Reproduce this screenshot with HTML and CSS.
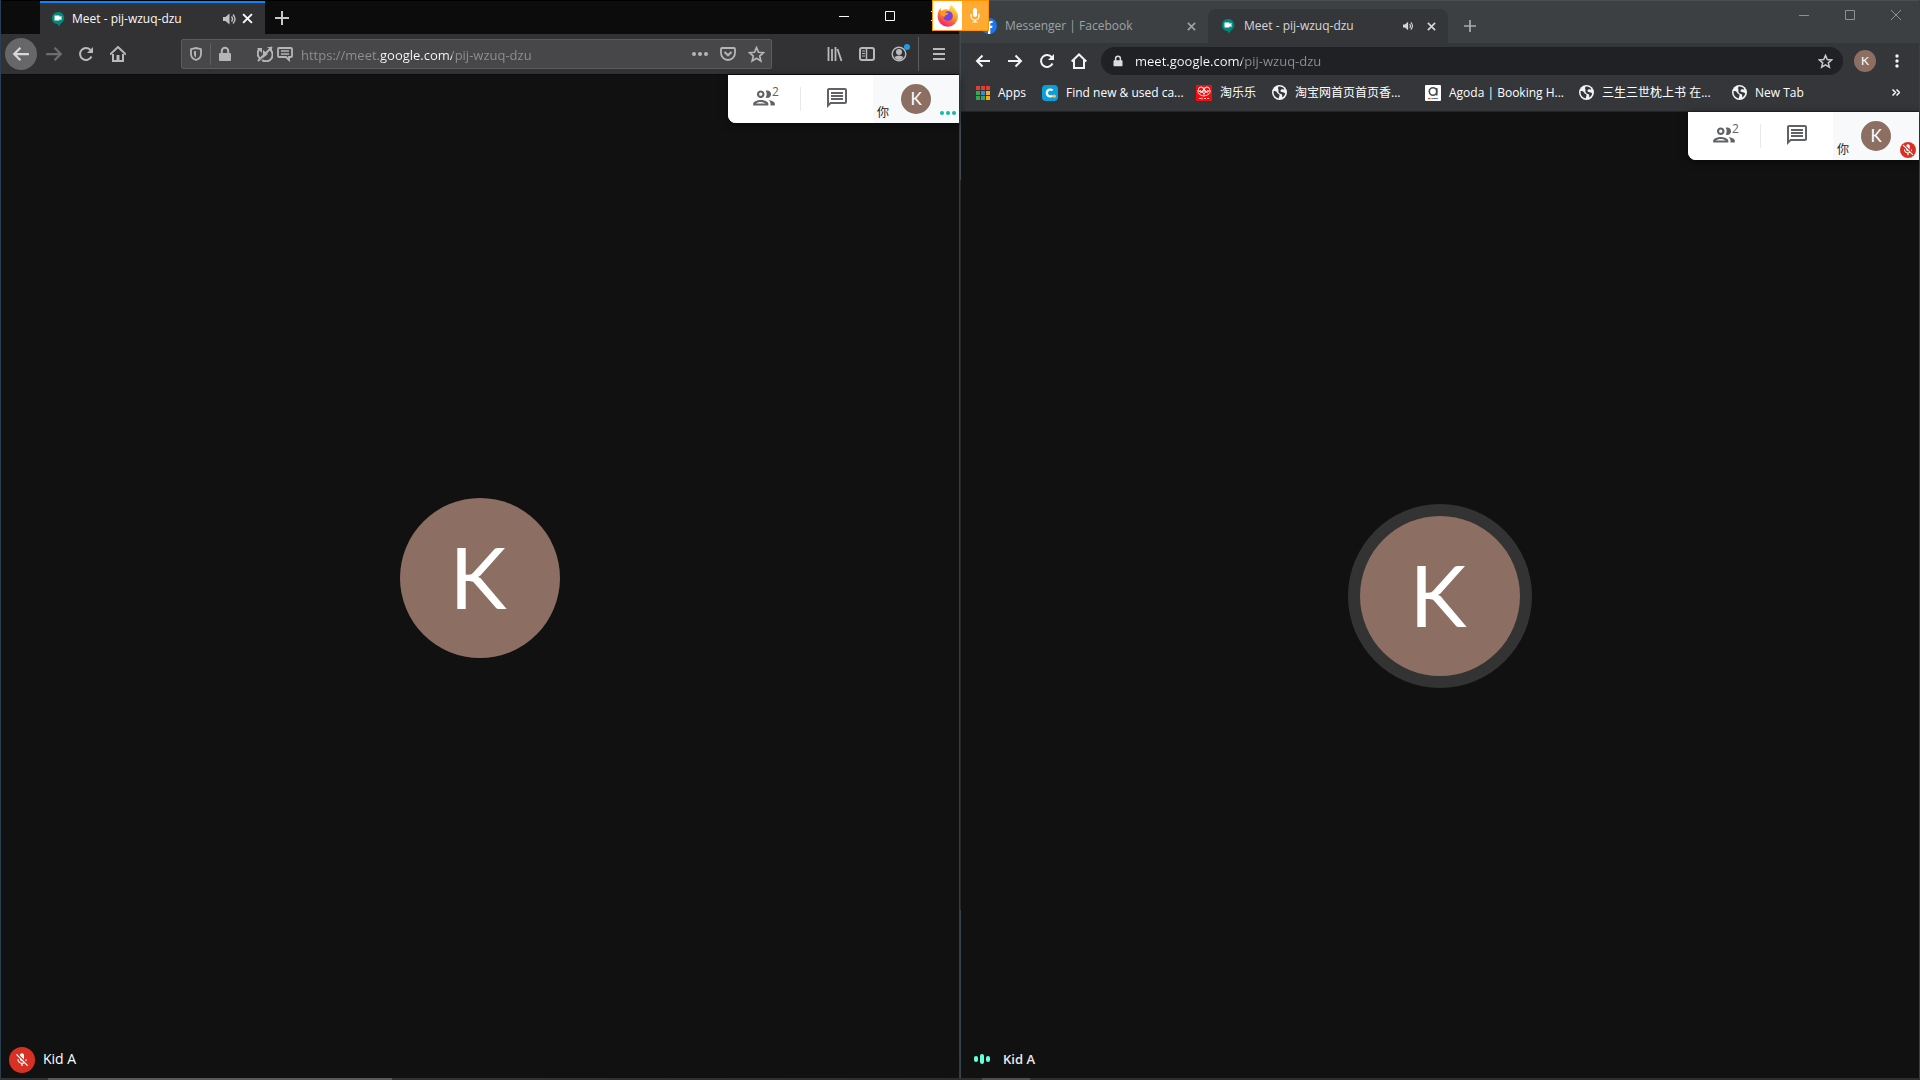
FILE: index.html
```html
<!DOCTYPE html>
<html lang="en">
<head>
<meta charset="utf-8">
<title>Meet - pij-wzuq-dzu</title>
<link rel="stylesheet" href="styles.css">
</head>
<body>
<svg class="defs" aria-hidden="true">
  <symbol id="meet" viewBox="0 0 14 16"><path d="M7 1a6 6 0 0 1 3.500 11L7.500 15.500l-.5-2.200A6 6 0 0 1 7 1z" fill="#00897b"/><path d="M3.500 4.500h5v1.500l2-1.300v4.600l-2-1.300v1.500h-5z" fill="#fff"/></symbol>
  <symbol id="people" viewBox="0 0 24 24"><path fill="currentColor" d="M9 13.750c-2.340 0-7 1.170-7 3.500V19h14v-1.750c0-2.330-4.660-3.500-7-3.500zM4.340 17c.84-.58 2.870-1.250 4.660-1.250s3.820.67 4.660 1.250H4.340zM9 12c1.930 0 3.500-1.570 3.500-3.500S10.930 5 9 5 5.500 6.570 5.500 8.500 7.070 12 9 12zm0-5c.83 0 1.500.67 1.500 1.500S9.830 10 9 10s-1.500-.67-1.500-1.500S8.170 7 9 7zm7.040 6.810c1.160.84 1.960 1.960 1.960 3.440V19h4v-1.750c0-2.020-3.500-3.170-5.960-3.440zM15 12c1.930 0 3.500-1.570 3.500-3.500S16.930 5 15 5c-.54 0-1.040.13-1.500.35.63.89 1 1.980 1 3.150s-.37 2.260-1 3.150c.46.22.96.35 1.500.35z"/></symbol>
  <symbol id="chat" viewBox="0 0 24 24"><path fill="currentColor" d="M4 4h16v12H5.170L4 17.170V4m0-2c-1.100 0-1.990.9-1.990 2L2 22l4-4h14c1.100 0 2-.9 2-2V4c0-1.100-.9-2-2-2H4zm2 10h12v2H6v-2zm0-3h12v2H6V9zm0-3h12v2H6V6z"/></symbol>
  <symbol id="micoff" viewBox="0 0 24 24"><path fill="#fff" d="M19 11h-1.700c0 .74-.16 1.430-.43 2.050l1.230 1.230c.56-.98.9-2.090.9-3.280zm-4.020.17c0-.06.02-.11.02-.17V5c0-1.660-1.340-3-3-3S9 3.340 9 5v.18l5.980 5.990zM4.270 3L3 4.270l6.010 6.010V11c0 1.660 1.330 3 2.990 3 .22 0 .44-.03.65-.08l1.660 1.660c-.71.33-1.500.52-2.310.52-2.760 0-5.300-2.100-5.300-5.100H5c0 3.410 2.720 6.230 6 6.720V21h2v-3.280c.91-.13 1.770-.45 2.540-.9L19.730 21 21 19.730 4.270 3z"/></symbol>
  <symbol id="back" viewBox="0 0 16 16"><path d="M15 8H2M7.500 2.500L2 8l5.500 5.500" fill="none" stroke="currentColor" stroke-width="2"/></symbol>
  <symbol id="forward" viewBox="0 0 16 16"><path d="M1 8h13M8.500 2.500L14 8l-5.500 5.500" fill="none" stroke="currentColor" stroke-width="2"/></symbol>
  <symbol id="reload" viewBox="0 0 16 16"><path d="M13.500 10.500A6 6 0 1 1 12.800 4.300" fill="none" stroke="currentColor" stroke-width="2"/><path d="M15 1v6H9z" fill="currentColor"/></symbol>
  <symbol id="lock" viewBox="0 0 16 16"><path d="M3 7h10a1 1 0 0 1 1 1v6a1 1 0 0 1-1 1H3a1 1 0 0 1-1-1V8a1 1 0 0 1 1-1z" fill="currentColor"/><path d="M4.800 8V5a3.200 3.200 0 0 1 6.400 0v3" fill="none" stroke="currentColor" stroke-width="2"/></symbol>
  <symbol id="star" viewBox="0 0 16 16"><path d="M8 1.500l1.900 4.400 4.700.4-3.600 3.100 1.100 4.700L8 11.600l-4.100 2.500L5 9.400 1.400 6.300l4.700-.4z" fill="none" stroke="currentColor" stroke-width="1.600"/></symbol>
  <symbol id="cross" viewBox="0 0 10 10"><path d="M1 1l8 8M9 1L1 9" fill="none" stroke="currentColor" stroke-width="1.800"/></symbol>
  <symbol id="plus" viewBox="0 0 14 14"><path d="M7 0v14M0 7h14" fill="none" stroke="currentColor" stroke-width="2"/></symbol>
  <symbol id="sound" viewBox="0 0 14 12"><path d="M0 4h2.500L6.500.5v11L2.500 8H0z" fill="currentColor"/><path d="M8.500 3.500q2 2.500 0 5M10 1.500q4 4.500 0 9" fill="none" stroke="currentColor" stroke-width="1.400"/></symbol>
  <symbol id="wmin" viewBox="0 0 10 10"><path d="M0 5.500h10" stroke="currentColor"/></symbol>
  <symbol id="wmax" viewBox="0 0 10 10"><path d="M.5.5h9v9h-9z" fill="none" stroke="currentColor"/></symbol>
  <symbol id="wclose" viewBox="0 0 10 10"><path d="M0 0l10 10M10 0L0 10" stroke="currentColor"/></symbol>
  <symbol id="globe" viewBox="0 0 14 14"><circle cx="7" cy="7" r="7" fill="#f1f3f4"/><path d="M1.500 5.500c2 0 3 .5 3.500 2s2 .5 2 2-.8 1.500-.5 3C4 12 1.500 10 1.500 7zM6 1.600c2.500-.4 4.500.6 5.500 2.400C10 4.500 9.500 3.500 8.500 4.500S7.500 6 9 6.500s3 .5 3.300 1.500c-.5 2-1.500 3-2.800 3.600 0-1.500.3-2.600-1-3.100S5.500 7 6 5.500 5 3.500 6 1.600z" fill="#35363a"/></symbol>
</svg>

<div class="desktop">
  <section class="window firefox" aria-label="Firefox">
    <header class="fx-tabs">
      <div class="fx-tab">
        <svg class="favicon"><use href="#meet"/></svg>
        <span class="tab-title">Meet - pij-wzuq-dzu</span>
        <button class="icon-btn fx-sound" aria-label="Mute tab"><svg width="14" height="12"><use href="#sound"/></svg></button>
        <button class="icon-btn fx-close" aria-label="Close tab"><svg width="11" height="11"><use href="#cross"/></svg></button>
      </div>
      <button class="icon-btn fx-new" aria-label="New tab"><svg width="14" height="14"><use href="#plus"/></svg></button>
      <div class="controls">
        <button class="icon-btn" aria-label="Minimize"><svg width="10" height="10"><use href="#wmin"/></svg></button>
        <button class="icon-btn" aria-label="Maximize"><svg width="10" height="10"><use href="#wmax"/></svg></button>
        <button class="icon-btn" aria-label="Close"><svg width="10" height="10"><use href="#wclose"/></svg></button>
      </div>
    </header>
    <nav class="fx-toolbar">
      <button class="icon-btn fx-back" aria-label="Back"><svg width="18" height="18"><use href="#back"/></svg></button>
      <button class="icon-btn tool dim" aria-label="Forward"><svg width="18" height="18"><use href="#forward"/></svg></button>
      <button class="icon-btn tool" aria-label="Reload"><svg width="16" height="16"><use href="#reload"/></svg></button>
      <button class="icon-btn tool" aria-label="Home"><svg width="16" height="16" viewBox="0 0 16 16"><path d="M0 8.500L8 1l8 7.500" fill="none" stroke="currentColor" stroke-width="2"/><path d="M3 8v7h10V8" fill="none" stroke="currentColor" stroke-width="2"/><path d="M6.500 9h3v5h-3z" fill="currentColor"/></svg></button>
      <div class="fx-url">
        <button class="icon-btn shield" aria-label="Tracking protection"><svg width="12" height="14" viewBox="0 0 12 14"><path d="M6 1l5 1.200V7c0 3-2 5-5 6-3-1-5-3-5-6V2.200z" fill="none" stroke="currentColor" stroke-width="1.800"/><path d="M6 4v6.500C4.500 9.500 4 8.500 4 7V4.300z" fill="currentColor"/></svg></button>
        <button class="icon-btn lock" aria-label="Site information"><svg width="16" height="16"><use href="#lock"/></svg></button>
        <button class="icon-btn small" aria-label="Autoplay blocked"><svg width="16" height="16" viewBox="0 0 16 16"><path d="M3 2.500A6.500 6.500 0 0 0 3 12.500M13 3.500A6.500 6.500 0 0 1 5 14" fill="none" stroke="currentColor" stroke-width="2"/><path d="M0 2h5v5zM10 1h5v4zM6 4l5 4-5 4z" fill="currentColor"/><path d="M1 15L15 1" stroke="currentColor" stroke-width="2"/></svg></button>
        <button class="icon-btn small" aria-label="Notifications"><svg width="16" height="16" viewBox="0 0 16 16"><path d="M2 2h12a1 1 0 0 1 1 1v7a1 1 0 0 1-1 1h-2v3l-3-3H2a1 1 0 0 1-1-1V3a1 1 0 0 1 1-1z" fill="none" stroke="currentColor" stroke-width="1.800"/><path d="M4 5h8M4 8h8" stroke="currentColor" stroke-width="1.400"/></svg></button>
        <input class="url-text fx-input" aria-label="Address" value="https://meet.google.com/pij-wzuq-dzu">
        <button class="icon-btn mark" aria-label="Page actions"><svg width="16" height="4" viewBox="0 0 16 4"><circle cx="2" cy="2" r="2"/><circle cx="8" cy="2" r="2"/><circle cx="14" cy="2" r="2"/></svg></button>
        <button class="icon-btn mark" aria-label="Save to Pocket"><svg width="16" height="14" viewBox="0 0 16 14"><path d="M2 1h12a1 1 0 0 1 1 1v4A7 7 0 0 1 1 6V2a1 1 0 0 1 1-1z" fill="none" stroke="currentColor" stroke-width="1.800"/><path d="M4.500 5L8 8.300 11.500 5" fill="none" stroke="currentColor" stroke-width="2"/></svg></button>
        <button class="icon-btn mark" aria-label="Bookmark"><svg width="17" height="17"><use href="#star"/></svg></button>
      </div>
      <button class="icon-btn tool" aria-label="Library"><svg width="16" height="16" viewBox="0 0 16 16"><path d="M1.500 1v14M5 3v12M8.500 1v14M10.500 3l4 12" stroke="currentColor" stroke-width="1.800"/></svg></button>
      <button class="icon-btn tool" aria-label="Sidebars"><svg width="16" height="14" viewBox="0 0 16 14"><rect x="1" y="1" width="14" height="12" rx="2" fill="none" stroke="currentColor" stroke-width="2"/><path d="M7.500 1v12" stroke="currentColor" stroke-width="1.500"/><path d="M3 4h3M3 6.500h3M3 9h3" stroke="currentColor"/></svg></button>
      <button class="icon-btn tool account" aria-label="Account"><svg width="16" height="16" viewBox="0 0 16 16"><circle cx="8" cy="8" r="6.800" fill="none" stroke="currentColor" stroke-width="1.400"/><circle cx="8" cy="6" r="3" fill="currentColor"/><path d="M3.500 11q4.500-3 9 0-1.500 3-4.500 3t-4.500-3z" fill="currentColor"/></svg><i class="notice"></i></button>
      <i class="rule"></i>
      <button class="icon-btn tool" aria-label="Menu"><svg width="12" height="12" viewBox="0 0 12 12"><path d="M0 1h12M0 6h12M0 11h12" stroke="currentColor" stroke-width="2"/></svg></button>
    </nav>
    <main class="video">
      <div class="panel">
        <button class="seg" aria-label="People"><svg width="26" height="26"><use href="#people"/></svg><span class="count">2</span></button>
        <button class="seg chat" aria-label="Chat"><svg width="24" height="24"><use href="#chat"/></svg></button>
        <div class="you"><span class="you-label" lang="zh">你</span><span class="avatar mid">K</span>
          <svg class="dots" width="16" height="4" viewBox="0 0 16 4"><circle cx="2" cy="2" r="2"/><circle cx="8" cy="2" r="2"/><circle cx="14" cy="2" r="2"/></svg></div>
      </div>
      <span class="avatar big">K</span>
      <div class="name"><span class="muted"><svg width="16" height="16"><use href="#micoff"/></svg></span><span>Kid A</span></div>
    </main>
  </section>

  <section class="window chrome" aria-label="Chrome">
    <header class="cr-tabs">
      <div class="cr-tab">
        <svg class="cr-fav" viewBox="0 0 16 16"><circle cx="8" cy="8" r="8" fill="#1877f2"/><path d="M7 16v-6H5V7.700h2V6c0-2 1.200-3.100 3-3.100h1.600V5h-1.100c-.9 0-1.200.5-1.200 1.200v1.500h2.200L11.200 10H9.300v6z" fill="#fff"/></svg>
        <span class="tab-title">Messenger | Facebook</span>
        <button class="icon-btn cr-close" aria-label="Close tab"><svg width="9" height="9"><use href="#cross"/></svg></button>
      </div>
      <div class="cr-tab active">
        <svg class="cr-fav"><use href="#meet"/></svg>
        <span class="tab-title">Meet - pij-wzuq-dzu</span>
        <button class="icon-btn cr-sound" aria-label="Mute tab"><svg width="11" height="10"><use href="#sound"/></svg></button>
        <button class="icon-btn cr-close" aria-label="Close tab"><svg width="9" height="9"><use href="#cross"/></svg></button>
      </div>
      <button class="icon-btn cr-new" aria-label="New tab"><svg width="12" height="12"><use href="#plus"/></svg></button>
      <div class="controls">
        <button class="icon-btn" aria-label="Minimize"><svg width="10" height="10"><use href="#wmin"/></svg></button>
        <button class="icon-btn" aria-label="Maximize"><svg width="10" height="10"><use href="#wmax"/></svg></button>
        <button class="icon-btn" aria-label="Close"><svg width="10" height="10"><use href="#wclose"/></svg></button>
      </div>
    </header>
    <nav class="cr-toolbar">
      <button class="icon-btn tool" aria-label="Back"><svg width="16" height="16"><use href="#back"/></svg></button>
      <button class="icon-btn tool" aria-label="Forward"><svg width="16" height="16"><use href="#forward"/></svg></button>
      <button class="icon-btn tool" aria-label="Reload"><svg width="16" height="16"><use href="#reload"/></svg></button>
      <button class="icon-btn tool" aria-label="Home"><svg width="16" height="16" viewBox="0 0 16 16"><path d="M.7 8.500L8 1.500l7.300 7M3 7v8h10V7" fill="none" stroke="currentColor" stroke-width="2"/></svg></button>
      <div class="cr-url">
        <button class="icon-btn cr-lock" aria-label="Site information"><svg width="12" height="12"><use href="#lock"/></svg></button>
        <input class="url-text cr-input" aria-label="Address" value="meet.google.com/pij-wzuq-dzu">
        <button class="icon-btn cr-star" aria-label="Bookmark"><svg width="15" height="15"><use href="#star"/></svg></button>
      </div>
      <button class="icon-btn tool profile" aria-label="Profile"><span class="avatar tiny">K</span></button>
      <button class="icon-btn tool" aria-label="Menu"><svg width="4" height="14" viewBox="0 0 4 14"><g fill="currentColor"><circle cx="2" cy="2" r="1.700"/><circle cx="2" cy="7" r="1.700"/><circle cx="2" cy="12" r="1.700"/></g></svg></button>
    </nav>
    <nav class="bookmarks">
      <a href="#"><svg width="14" height="14" viewBox="0 0 14 14"><path d="M0 0h4v4H0zM5 0h4v4H5zM10 0h4v4h-4z" fill="#ea3a30"/><path d="M0 5h4v4H0zM0 10h4v4H0z" fill="#34a853"/><path d="M5 5h4v4H5z" fill="#2b8cf0"/><path d="M5 10h4v4H5z" fill="#34a853"/><path d="M10 5h4v4h-4zM10 10h4v4h-4z" fill="#fbab12"/></svg><span>Apps</span></a>
      <a href="#"><svg width="16" height="16" viewBox="0 0 16 16"><rect width="16" height="16" rx="4" fill="#0c9ddb"/><path d="M10.500 5.500A3.400 3.400 0 1 0 10.500 10.500" fill="none" stroke="#fff" stroke-width="2.300"/><circle cx="12.300" cy="11.200" r="1.600" fill="#fdc04d"/></svg><span class="cut">Find new &amp; used ca...</span></a>
      <a href="#"><svg width="16" height="16" viewBox="0 0 16 16"><path d="M0 0h16v16H0z" fill="#f40b0b"/><circle cx="5" cy="4.500" r="2.500" fill="none" stroke="#fff"/><circle cx="11" cy="4.500" r="2.500" fill="none" stroke="#fff"/><path d="M2 5q-1 5 6 6 7-1 6-6M4 5l4 4 4-4M4 8.500l4-4 4 4M8 2v9M3 13.500h2M6 12.500v2M8 13.500h2M11 13.500h2" fill="none" stroke="#fff" stroke-width=".8"/></svg><span lang="zh">淘乐乐</span></a>
      <a href="#"><svg width="15" height="15"><use href="#globe"/></svg><span class="cut" lang="zh">淘宝网首页首页香...</span></a>
      <a href="#"><svg width="16" height="16" viewBox="0 0 16 16"><rect width="16" height="16" rx="1" fill="#fff"/><circle cx="8" cy="6.500" r="3.700" fill="none" stroke="#4a4a4a" stroke-width="1.600"/><path d="M11.800 3v7.500" stroke="#4a4a4a" stroke-width="1.500"/><path d="M3 13.500h2" stroke="#e33"/><path d="M5 13.500h2" stroke="#f93"/><path d="M7 13.500h2" stroke="#3a5"/><path d="M9 13.500h2" stroke="#93c"/><path d="M11 13.500h2" stroke="#29d"/></svg><span class="cut">Agoda | Booking H...</span></a>
      <a href="#"><svg width="15" height="15"><use href="#globe"/></svg><span class="cut" lang="zh">三生三世枕上书 在...</span></a>
      <a href="#"><svg width="15" height="15"><use href="#globe"/></svg><span>New Tab</span></a>
      <button class="icon-btn more" aria-label="More bookmarks"><svg width="8" height="7" viewBox="0 0 8 7"><path d="M.5.500l3 3-3 3M4.500.500l3 3-3 3" fill="none" stroke="currentColor" stroke-width="1.500"/></svg></button>
    </nav>
    <main class="video">
      <div class="panel">
        <button class="seg" aria-label="People"><svg width="26" height="26"><use href="#people"/></svg><span class="count">2</span></button>
        <button class="seg chat" aria-label="Chat"><svg width="24" height="24"><use href="#chat"/></svg></button>
        <div class="you"><span class="you-label" lang="zh">你</span><span class="avatar mid">K</span>
          <span class="badge"><svg width="14" height="14"><use href="#micoff"/></svg></span></div>
      </div>
      <span class="avatar big ring">K</span>
      <div class="name bold"><svg width="16" height="10" viewBox="0 0 16 10"><g fill="#64ffda"><rect y="2" width="4" height="6" rx="2"/><rect x="6" width="4" height="10" rx="2"/><rect x="12" y="2" width="4" height="6" rx="2"/></g></svg><span>Kid A</span></div>
    </main>
  </section>

  <div class="sharing" role="status" aria-label="Firefox is using your microphone">
    <span class="share-logo"><svg width="22" height="22" viewBox="0 0 22 22"><defs><linearGradient id="fox" x1=".8" y1="0" x2=".3" y2="1"><stop offset="0" stop-color="#fff04a"/><stop offset=".45" stop-color="#ff9a1e"/><stop offset="1" stop-color="#f5156c"/></linearGradient></defs><path d="M15 0c1 3 6 6 6 11.500a10.200 10.200 0 0 1-20.400 0C.6 8 1.500 5 3.500 3L4 6l3-1.500c2-.8 4 .3 5.500.3C12 3 13 1 15 0z" fill="url(#fox)"/><circle cx="11" cy="11" r="4.800" fill="#7542e5"/><path d="M3 8c3-2 6-.5 8.500.5-1 1.800-3.500 1-4 3.500-2-.5-4-2-4.500-4z" fill="#ff9a1e"/></svg></span>
    <span class="share-mic"><svg width="10" height="15" viewBox="0 0 10 15"><rect x="3" width="4" height="9" rx="2" fill="#fff"/><path d="M1 6v2a4 4 0 0 0 8 0V6M5 12v2M2.500 14h5" fill="none" stroke="#fff" stroke-width="1.200"/></svg></span>
  </div>
  <div class="taskbar"></div>
</div>
</body>
</html>
```
FILE: styles.css
```css
* { box-sizing: border-box; }
body {
  margin: 0;
  background: #111;
  font: 12px/16px "Open Sans", "Noto Sans CJK SC", sans-serif;
  color: #f9f9fa;
}
svg { display: block; flex: none; }
.defs { position: absolute; width: 0; height: 0; }
.desktop {
  position: relative;
  display: grid;
  grid-template-columns: 1fr 1fr;
  min-height: 100vh;
}
.window {
  display: flex; flex-direction: column; min-width: 0; padding: 0 1px;
  background: linear-gradient(#2c3f58, #29404c);
}
.chrome { background: linear-gradient(90deg, transparent 50%, #2c3f68 50%), linear-gradient(#3f4b50 180px, #262626 180px, #262626 910px, #35444e 910px); }
.icon-btn {
  display: flex; align-items: center; justify-content: center;
  flex: none; padding: 0; border: 0; background: none; color: inherit; font: inherit;
}
.icon-btn svg { fill: currentColor; }
.tool { width: 32px; height: 32px; }
.tab-title { flex: 1; white-space: nowrap; }
.controls { display: flex; margin-left: auto; }
.controls .icon-btn { width: 46px; height: 30px; }
.avatar {
  display: flex; align-items: center; justify-content: center; flex: none;
  border-radius: 50%; background: #8d6e63; color: #fff;
  font-family: Lato, sans-serif;
}
.tiny { width: 22px; height: 22px; font-size: 12px; }
.mid { width: 30px; height: 30px; font-size: 17px; }
.big { width: 160px; height: 160px; padding: 0 4px 4px 0; font-size: 86px; line-height: 120px; }
.ring { box-shadow: 0 0 0 12px #333; }
.url-text {
  flex: 1; min-width: 0; padding: 0; border: 0; outline: 0;
  font: 13px/20px "Open Sans", sans-serif;
  background-clip: text; -webkit-background-clip: text;
  -webkit-text-fill-color: transparent;
}

/* Firefox */
.fx-tabs { display: flex; height: 34px; background: #0c0c0d; border-top: 1px solid #000; }
.fx-tab {
  display: flex; align-items: center; width: 225px; margin-left: 39px; padding: 0 12px 0 11px;
  background: #323234; border-top: 2px solid #0a84ff;
}
.favicon { width: 14px; height: 16px; margin-right: 7px; }
.fx-sound { margin-right: 5px; color: #c1c1c3; }
.fx-new { width: 34px; color: #c8c8ca; }
.fx-toolbar {
  display: flex; align-items: center; height: 41px; padding: 0 4px;
  background: #323234; border-bottom: 1px solid #0c0c0d; color: #b9b9bb;
}
.fx-back { width: 32px; height: 32px; margin-right: 1px; border-radius: 50%; background: #676769; color: #d8d8d9; }
.dim { color: #6d6d6f; }
.fx-url {
  display: flex; align-items: center; flex: 1; height: 30px; margin: 0 47px;
  padding-right: 1px; background: #474749; border: 1px solid #5c5c5e; color: #b5b5b7; border-radius: 2px;
}
.shield { width: 29px; height: 22px; border-right: 1px solid #5f5f61; }
.lock { width: 28px; margin-right: 16px; }
.small { width: 20px; }
.fx-input { padding-top: 2px; margin-left: 6px; color: #909092; background-color: transparent; background-image: linear-gradient(90deg, #909092 79px, #f9f9fa 79px, #f9f9fa 151px, #909092 151px); }
.mark { width: 28px; }
.account { position: relative; }
.notice { position: absolute; top: 6px; right: 5px; width: 6px; height: 6px; border-radius: 50%; background: #1b9de8; }
.rule { width: 1px; height: 34px; margin: 0 4px 0 3px; background: #5c5c5e; }

/* Chrome */
.cr-tabs { display: flex; height: 43px; background: #3c4043; border-top: 1px solid #4b4f52; }
.cr-tab { display: flex; align-items: center; width: 239px; margin-top: 8px; padding: 0 12px; color: #9fa2a5; }
.cr-tab:first-child { margin-left: 8px; }
.cr-tab.active { width: 240px; background: #35363a; border-radius: 8px 8px 0 0; color: #d5d7da; }
.cr-fav { width: 16px; height: 16px; margin-right: 8px; }
.cr-sound { margin-right: 13px; }
.cr-new { width: 44px; margin-top: 8px; color: #a8abad; }
.chrome .controls { color: #8e9193; }
.chrome .controls .icon-btn { height: 28px; }
.cr-toolbar { display: flex; align-items: center; height: 36px; padding: 0 6px; background: #35363a; color: #f1f3f4; }
.cr-url { display: flex; align-items: center; flex: 1; height: 28px; margin: 0 6px; border-radius: 14px; background: #202124; }
.cr-lock { width: 34px; color: #dadce0; }
.cr-input { color: #9aa0a6; background-color: transparent; background-image: linear-gradient(90deg, #fff 107px, #8d9196 107px); }
.cr-star { width: 36px; color: #c6c9cc; }
.bookmarks { display: flex; align-items: center; gap: 16px; height: 33px; padding: 0 19px 5px 15px; background: #35363a; border-bottom: 1px solid #232427; }
.bookmarks a { display: flex; align-items: center; gap: 8px; color: #fff; text-decoration: none; white-space: nowrap; }
.cut { width: 114px; }
.more { margin-left: auto; }

/* Call view */
.video { position: relative; display: flex; flex: 1; align-items: center; justify-content: center; background: #111; }
.panel {
  position: absolute; top: 0; right: 0; display: flex; height: 48px;
  background: #fff; border-radius: 0 0 0 8px; overflow: hidden; color: #5f6368;
  box-shadow: 0 2px 8px #0008;
}
.seg { position: relative; display: flex; align-items: center; justify-content: center; width: 72px; padding: 0 0 2px; border: 0; background: #fff; color: inherit; }
.chat { width: 73px; background: linear-gradient(#e8eaed, #e8eaed) left center / 1px 24px no-repeat #fff; }
.count { position: absolute; top: 9px; left: 44px; font: 12px/16px "Open Sans", sans-serif; }
.you { position: relative; display: flex; gap: 12px; width: 86px; padding: 9px 0 0 4px; background: #f8f9fa; }
.you-label { align-self: flex-end; padding-bottom: 2px; color: #202124; }
.dots { position: absolute; right: 3px; bottom: 8px; fill: #12b9a4; }
.badge, .muted { display: flex; align-items: center; justify-content: center; border-radius: 50%; background: #d93025; }
.badge { position: absolute; right: 3px; bottom: 2px; width: 16px; height: 16px; }
.muted { width: 26px; height: 26px; }
.name { position: absolute; left: 8px; bottom: 7px; display: flex; align-items: center; gap: 8px; height: 26px; font: 500 14px/20px "Open Sans", sans-serif; color: #fff; }
.name span:last-child { padding-bottom: 2px; }
.name.bold { left: 13px; gap: 13px; font-weight: 600; font-size: 13px; color: #e8eaed; }
.name.bold svg { margin-bottom: 2px; }

/* Desktop overlays */
.sharing { position: absolute; top: 0; left: calc(50% - 28px); display: flex; width: 57px; height: 31px; border: 1px solid #ff9400; background: #ffaa33; }
.share-logo, .share-mic { display: flex; align-items: center; justify-content: center; }
.share-logo { width: 29px; background: #fff; }
.share-mic { flex: 1; }
.taskbar { position: absolute; left: 0; right: 0; bottom: 0; height: 2px; background: linear-gradient(90deg, #333 48px, #5a5a5a 48px, #5a5a5a 392px, #333 392px, #2e2e2e 982px, #505050 982px, #505050 1030px, #2e2e2e 1030px); }
```
